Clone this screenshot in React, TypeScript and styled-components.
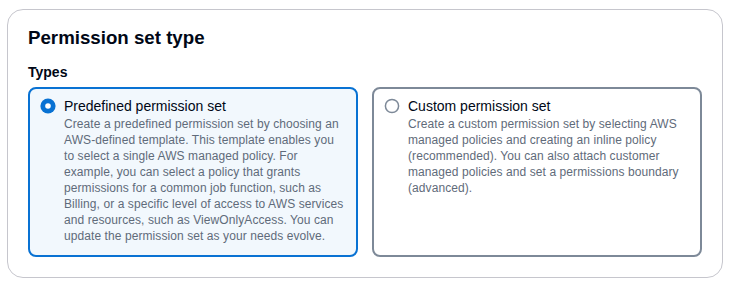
import styled, { createGlobalStyle } from "styled-components";

const GlobalStyle = createGlobalStyle`
  body {
    margin: 0;
    background: #ffffff;
    font-family: "Liberation Sans", Arial, sans-serif;
    color: #000716;
  }
`;

type Option = {
  id: string;
  label: string;
  description: string;
};

const options: Option[] = [
  {
    id: "predefined",
    label: "Predefined permission set",
    description:
      "Create a predefined permission set by choosing an AWS-defined template. This template enables you to select a single AWS managed policy. For example, you can select a policy that grants permissions for a common job function, such as Billing, or a specific level of access to AWS services and resources, such as ViewOnlyAccess. You can update the permission set as your needs evolve.",
  },
  {
    id: "custom",
    label: "Custom permission set",
    description:
      "Create a custom permission set by selecting AWS managed policies and creating an inline policy (recommended). You can also attach customer managed policies and set a permissions boundary (advanced).",
  },
];

const RadioIcon = ({ checked }: { checked: boolean }) => (
  <RadioSvg viewBox="0 0 16 16" aria-hidden>
    {checked ? (
      <>
        <circle cx="8" cy="8" r="7.6" fill="#0972d3" />
        <circle cx="8" cy="8" r="2.8" fill="#ffffff" />
      </>
    ) : (
      <circle cx="8" cy="8" r="6.6" fill="#ffffff" stroke="#7d8998" strokeWidth="1.5" />
    )}
  </RadioSvg>
);

export default function App() {
  const selected = "predefined";

  return (
    <>
      <GlobalStyle />
      <Container>
        <Title>Permission set type</Title>
        <FieldLabel>Types</FieldLabel>
        <Tiles>
          {options.map((opt) => {
            const checked = opt.id === selected;
            return (
              <Tile key={opt.id} $checked={checked}>
                <RadioIcon checked={checked} />
                <TileText>
                  <TileLabel>{opt.label}</TileLabel>
                  <TileDescription>{opt.description}</TileDescription>
                </TileText>
              </Tile>
            );
          })}
        </Tiles>
      </Container>
    </>
  );
}

const Container = styled.section`
  box-sizing: border-box;
  width: 716px;
  margin: 9px 0 0 7px;
  padding: 16px 20px 20px;
  border: 1px solid #c6c6cd;
  border-radius: 16px;
  display: flex;
  flex-direction: column;
`;

const Title = styled.h2`
  margin: 0;
  font-size: 18.7px;
  line-height: 24px;
  font-weight: 700;
  color: #000716;
`;

const FieldLabel = styled.div`
  margin-top: 11px;
  font-size: 14px;
  line-height: 22px;
  font-weight: 700;
  color: #000716;
`;

const Tiles = styled.div`
  margin-top: 4px;
  display: grid;
  grid-template-columns: 1fr 1fr;
  gap: 14px;
`;

const Tile = styled.div<{ $checked: boolean }>`
  box-sizing: border-box;
  display: flex;
  align-items: flex-start;
  gap: 8px;
  padding: 7px 10px 11px;
  border: 2px solid ${(p) => (p.$checked ? "#0972d3" : "#7d8998")};
  border-radius: 8px;
  background: ${(p) => (p.$checked ? "#f2f8fd" : "#ffffff")};
`;

const RadioSvg = styled.svg`
  flex: none;
  width: 16px;
  height: 16px;
  margin-top: 2px;
`;

const TileText = styled.div`
  display: flex;
  flex-direction: column;
  min-width: 0;
`;

const TileLabel = styled.div`
  font-size: 14px;
  line-height: 20px;
  color: #000716;
`;

const TileDescription = styled.div`
  font-size: 12px;
  line-height: 16px;
  letter-spacing: 0.08px;
  color: #5f6b7a;
`;
